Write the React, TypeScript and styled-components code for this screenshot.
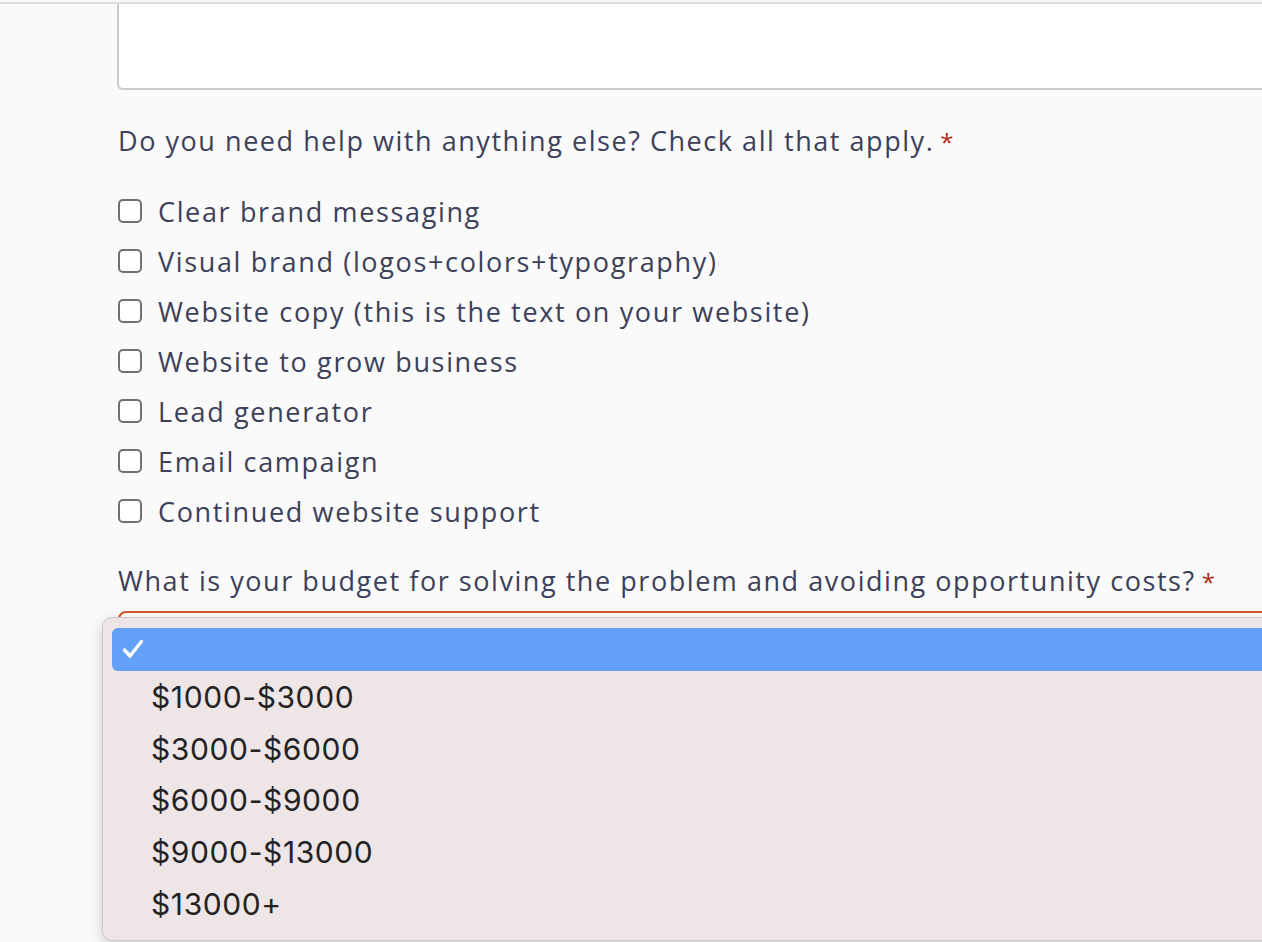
import React from "react";
import styled, { createGlobalStyle } from "styled-components";

const Global = createGlobalStyle`
  html, body { margin: 0; padding: 0; background: #fafafa; overflow: hidden; }
  * { box-sizing: border-box; }
`;

const Page = styled.div`
  width: 1262px;
  height: 942px;
  overflow: hidden;
  background: #fafafa;
  padding-top: 2px;
  font-family: "Open Sans", "Noto Sans", sans-serif;
  color: #3c4059;
`;

const TopRule = styled.div`
  height: 2px;
  background: #dcdcdc;
`;

const Form = styled.div`
  margin-left: 117px;
  width: 1300px;
  display: flex;
  flex-direction: column;
`;

const TextArea = styled.div`
  height: 86px;
  background: #ffffff;
  border: 2px solid #cbcbcb;
  border-top: none;
  border-radius: 0 0 6px 6px;
`;

const Question = styled.div<{ $top: number }>`
  margin-top: ${(p) => p.$top}px;
  padding-left: 1px;
  height: 30px;
  line-height: 30px;
  font-size: 27px;
  letter-spacing: 1.55px;
  white-space: nowrap;
`;

const Required = styled.span`
  color: #b02a17;
  margin-left: 6px;
  font-size: 24px;
  letter-spacing: 0;
`;

const CheckList = styled.div`
  margin-top: 30px;
  display: flex;
  flex-direction: column;
`;

const CheckRow = styled.label`
  height: 50px;
  display: flex;
  align-items: center;
  gap: 16px;
  padding-left: 1px;
  font-size: 27px;
  letter-spacing: 1.65px;
  white-space: nowrap;
`;

const Box = styled.span`
  width: 24px;
  height: 24px;
  border: 2px solid #707070;
  border-radius: 5px;
  background: #ffffff;
  flex: none;
`;

const SelectWrap = styled.div`
  position: relative;
  margin-top: 15px;
  margin-left: 1px;
`;

const SelectBox = styled.div`
  height: 52px;
  border: 2px solid #d9532e;
  border-radius: 8px;
  background: #ffffff;
`;

const Popup = styled.div`
  position: absolute;
  left: -16px;
  top: 6px;
  width: 1200px;
  height: 324px;
  background: #eee5e6;
  border: 1px solid #cdc8c9;
  border-radius: 10px;
  box-shadow: 0 4px 14px rgba(0, 0, 0, 0.18);
  padding: 10px 0 10px 9px;
  display: flex;
  flex-direction: column;
  font-family: Inter, "Liberation Sans", sans-serif;
`;

const Highlight = styled.div`
  height: 43px;
  background: #63a0f7;
  border-radius: 6px 0 0 6px;
  display: flex;
  align-items: center;
  padding-left: 10px;
`;

const Option = styled.div`
  height: 52px;
  display: flex;
  align-items: center;
  padding-left: 39px;
  font-size: 30px;
  color: #232323;
  letter-spacing: 0.6px;
`;

const items = [
  "Clear brand messaging",
  "Visual brand (logos+colors+typography)",
  "Website copy (this is the text on your website)",
  "Website to grow business",
  "Lead generator",
  "Email campaign",
  "Continued website support",
];

const options = ["$1000-$3000", "$3000-$6000", "$6000-$9000", "$9000-$13000", "$13000+"];

export default function App() {
  return (
    <>
      <Global />
      <Page>
        <TopRule />
        <Form>
          <TextArea />
          <Question $top={36}>
            Do you need help with anything else? Check all that apply.<Required>*</Required>
          </Question>
          <CheckList>
            {items.map((t) => (
              <CheckRow key={t}>
                <Box />
                {t}
              </CheckRow>
            ))}
          </CheckList>
          <Question $top={30}>
            What is your budget for solving the problem and avoiding opportunity costs?
            <Required>*</Required>
          </Question>
          <SelectWrap>
            <SelectBox />
            <Popup>
              <Highlight>
                <svg width="22" height="20" viewBox="0 0 22 20">
                  <path
                    d="M2.5 11 L8 17 L19.5 2.5"
                    fill="none"
                    stroke="#ffffff"
                    strokeWidth="3.4"
                    strokeLinecap="round"
                    strokeLinejoin="round"
                  />
                </svg>
              </Highlight>
              {options.map((o) => (
                <Option key={o}>{o}</Option>
              ))}
            </Popup>
          </SelectWrap>
        </Form>
      </Page>
    </>
  );
}
